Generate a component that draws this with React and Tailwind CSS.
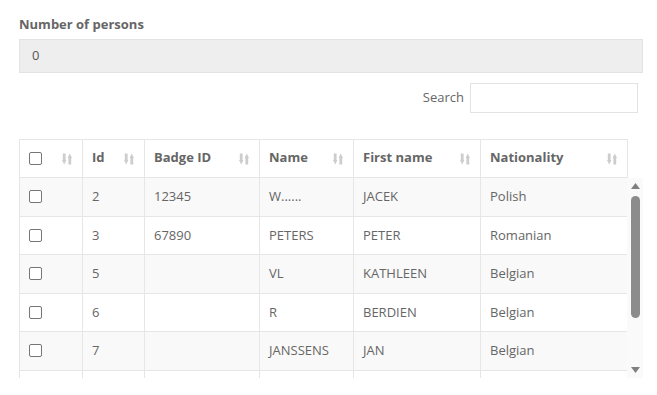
import React from 'react'

const cols = ['', 'Id', 'Badge ID', 'Name', 'First name', 'Nationality']
const widths = 'grid-cols-[63px_62px_115px_94px_127px_147px]'

const rows = [
  { id: '2', badge: '12345', name: 'W......', first: 'JACEK', nat: 'Polish' },
  { id: '3', badge: '67890', name: 'PETERS', first: 'PETER', nat: 'Romanian' },
  { id: '5', badge: '', name: 'VL', first: 'KATHLEEN', nat: 'Belgian' },
  { id: '6', badge: '', name: 'R', first: 'BERDIEN', nat: 'Belgian' },
  { id: '7', badge: '', name: 'JANSSENS', first: 'JAN', nat: 'Belgian' },
  { id: '', badge: '', name: '', first: '', nat: '' },
]

function SortIcon() {
  return (
    <svg width="10" height="12" viewBox="0 0 10 12" className="shrink-0">
      <rect x="0.8" y="0.5" width="2.8" height="7.5" fill="#cdcdcd" />
      <polygon points="0,7 4.4,7 2.2,11.5" fill="#cdcdcd" />
      <rect x="6.4" y="4" width="2.8" height="7.5" fill="#cdcdcd" />
      <polygon points="5.6,5 10,5 7.8,0.5" fill="#cdcdcd" />
    </svg>
  )
}

function Checkbox() {
  return <div className="w-[13px] h-[13px] border border-[#767676] rounded-[2px] bg-white" />
}

export default function App() {
  return (
    <div className="w-[657px] h-[395px] bg-white overflow-hidden pl-[19px] pr-[14px] pt-[16px] text-[13px] text-[#666] font-['Open_Sans',sans-serif]">
      <div className="font-bold text-[#666] leading-[16px]">Number of persons</div>
      <div className="mt-[7px] h-[34px] border border-[#e3e3e3] bg-[#eeeeee] pl-[12px] flex items-center text-[#555]">
        0
      </div>

      <div className="mt-[10px] flex items-center justify-end pr-[5px]">
        <span className="text-[#666] mr-[6px]">Search</span>
        <div className="w-[168px] h-[30px] border border-[#e3e3e3] bg-white" />
      </div>

      <div className="mt-[26px] w-[609px] border-l border-t border-[#e6e6e6]">
        <div className={`grid ${widths}`}>
          {cols.map((c, i) => (
            <div
              key={i}
              className="h-[38px] border-r border-b border-[#e6e6e6] pl-[9px] pr-[10px] flex items-center justify-between font-bold text-[#666]"
            >
              {i === 0 ? <Checkbox /> : <span className="-mt-[1px]">{c}</span>}
              <SortIcon />
            </div>
          ))}
        </div>
      </div>

      <div className="flex">
        <div className="w-[609px] h-[200px] overflow-hidden border-l border-[#e6e6e6]">
          {rows.map((r, i) => (
            <div key={i} className={`grid ${widths} ${i % 2 === 0 ? 'bg-[#f9f9f9]' : 'bg-white'}`}>
              {[null, r.id, r.badge, r.name, r.first, r.nat].map((v, j) => (
                <div key={j} className="h-[38.5px] border-r border-b border-[#e6e6e6] pl-[9px] flex items-center">
                  {j === 0 ? <Checkbox /> : v}
                </div>
              ))}
            </div>
          ))}
        </div>
        <div className="w-[16px] h-[200px] bg-[#fafafa] flex flex-col items-center pt-[5px] pb-[5px]">
          <svg width="9" height="6" viewBox="0 0 9 6">
            <polygon points="0,6 9,6 4.5,0" fill="#808080" />
          </svg>
          <div className="mt-[7px] w-[9px] h-[122px] rounded-[5px] bg-[#8c8c8c]" />
          <div className="flex-1" />
          <svg width="9" height="6" viewBox="0 0 9 6">
            <polygon points="0,0 9,0 4.5,6" fill="#808080" />
          </svg>
        </div>
      </div>
    </div>
  )
}
